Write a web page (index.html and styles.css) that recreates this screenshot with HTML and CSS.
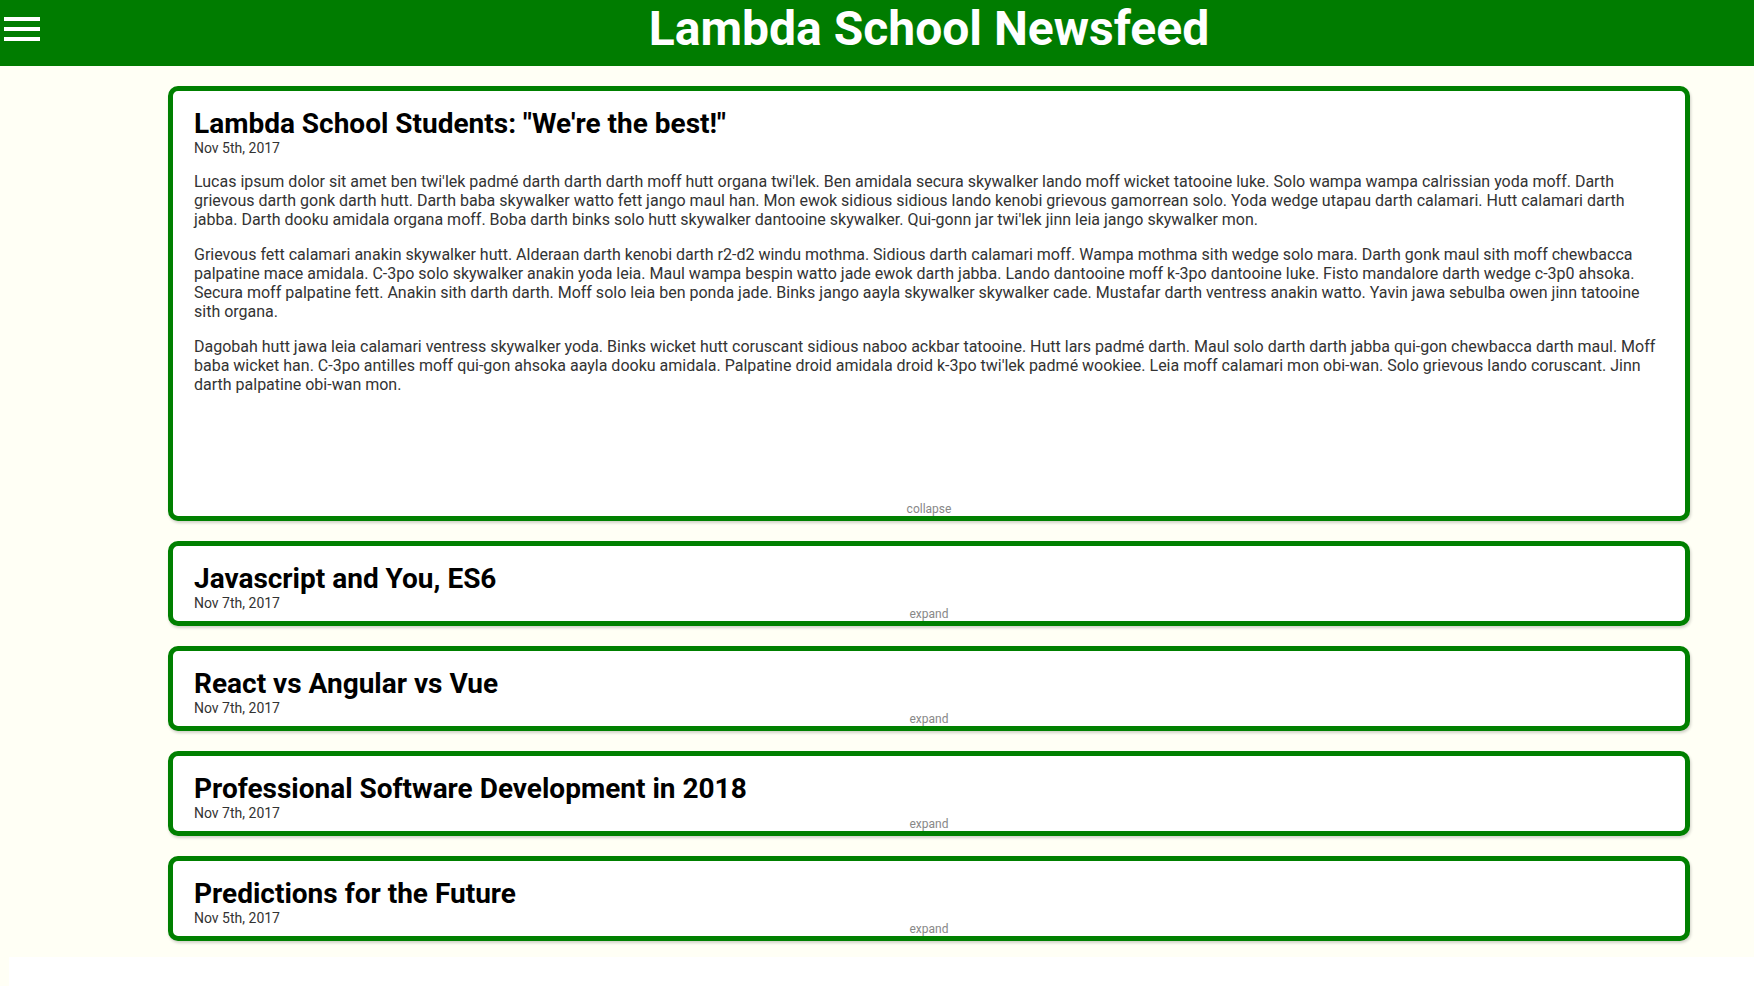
FILE: index.html
```html
<!DOCTYPE html>
<html lang="en">
<head>
<meta charset="utf-8">
<title>Lambda School Newsfeed</title>
<link rel="stylesheet" href="styles.css">
</head>
<body>
<div class="app">
  <header class="header">
    <div class="menu-col">
      <div class="menu-button" aria-label="menu">
        <span class="bar"></span>
        <span class="bar"></span>
        <span class="bar"></span>
      </div>
    </div>
    <h1 class="title">Lambda School Newsfeed</h1>
  </header>
  <main class="articles">
    <article class="article article-open">
      <h2 class="article-title">Lambda School Students: "We're the best!"</h2>
      <p class="date">Nov 5th, 2017</p>
      <p class="body-text">Lucas ipsum dolor sit amet ben twi'lek padmé darth darth darth moff hutt organa twi'lek. Ben amidala secura skywalker lando moff wicket tatooine luke. Solo wampa wampa calrissian yoda moff. Darth grievous darth gonk darth hutt. Darth baba skywalker watto fett jango maul han. Mon ewok sidious sidious lando kenobi grievous gamorrean solo. Yoda wedge utapau darth calamari. Hutt calamari darth jabba. Darth dooku amidala organa moff. Boba darth binks solo hutt skywalker dantooine skywalker. Qui-gonn jar twi'lek jinn leia jango skywalker mon.</p>
      <p class="body-text">Grievous fett calamari anakin skywalker hutt. Alderaan darth kenobi darth r2-d2 windu mothma. Sidious darth calamari moff. Wampa mothma sith wedge solo mara. Darth gonk maul sith moff chewbacca palpatine mace amidala. C-3po solo skywalker anakin yoda leia. Maul wampa bespin watto jade ewok darth jabba. Lando dantooine moff k-3po dantooine luke. Fisto mandalore darth wedge c-3p0 ahsoka. Secura moff palpatine fett. Anakin sith darth darth. Moff solo leia ben ponda jade. Binks jango aayla skywalker skywalker cade. Mustafar darth ventress anakin watto. Yavin jawa sebulba owen jinn tatooine sith organa.</p>
      <p class="body-text">Dagobah hutt jawa leia calamari ventress skywalker yoda. Binks wicket hutt coruscant sidious naboo ackbar tatooine. Hutt lars padmé darth. Maul solo darth darth jabba qui-gon chewbacca darth maul. Moff baba wicket han. C-3po antilles moff qui-gon ahsoka aayla dooku amidala. Palpatine droid amidala droid k-3po twi'lek padmé wookiee. Leia moff calamari mon obi-wan. Solo grievous lando coruscant. Jinn darth palpatine obi-wan mon.</p>
      <span class="expand-button">collapse</span>
    </article>
    <article class="article">
      <h2 class="article-title">Javascript and You, ES6</h2>
      <p class="date">Nov 7th, 2017</p>
      <span class="expand-button">expand</span>
    </article>
    <article class="article">
      <h2 class="article-title">React vs Angular vs Vue</h2>
      <p class="date">Nov 7th, 2017</p>
      <span class="expand-button">expand</span>
    </article>
    <article class="article">
      <h2 class="article-title">Professional Software Development in 2018</h2>
      <p class="date">Nov 7th, 2017</p>
      <span class="expand-button">expand</span>
    </article>
    <article class="article">
      <h2 class="article-title">Predictions for the Future</h2>
      <p class="date">Nov 5th, 2017</p>
      <span class="expand-button">expand</span>
    </article>
  </main>
</div>
<div class="tail"></div>
</body>
</html>
```

FILE: styles.css
```css
* {
  box-sizing: border-box;
}

html, body {
  margin: 0;
  padding: 0;
  background: #ffffff;
}

body {
  font-family: Roboto, "Liberation Sans", Arial, sans-serif;
  color: #000;
}

.app {
  background: #fffff5;
  padding-bottom: 16px;
}

.header {
  display: flex;
  align-items: flex-start;
  height: 66px;
  background: #007c00;
  padding-right: 64px;
}

.menu-col {
  width: 168px;
  flex: none;
  padding: 17px 0 0 4px;
}

.menu-button {
  display: flex;
  flex-direction: column;
  gap: 6px;
  width: 36px;
}

.bar {
  display: block;
  width: 36px;
  height: 4px;
  background: #ffffff;
}

.title {
  flex: 1;
  margin: 0;
  padding-top: 1px;
  text-align: center;
  color: #ffffff;
  font-size: 48px;
  font-weight: 700;
  line-height: 56px;
}

.articles {
  display: flex;
  flex-direction: column;
  gap: 20px;
  padding: 20px 64px 0 168px;
}

.article {
  position: relative;
  height: 85px;
  overflow: hidden;
  background: #ffffff;
  border: 5px solid #008000;
  border-radius: 10px;
  box-shadow: 1px 2px 3px rgba(0, 0, 0, 0.18);
  padding: 16px 20px 0 21px;
}

.article-open {
  height: 435px;
}

.article-title {
  margin: 0;
  font-size: 28px;
  font-weight: 700;
  line-height: 33px;
  color: #000;
}

.date {
  margin: 0 0 5px;
  font-size: 14px;
  line-height: 16px;
  color: #333;
}

.body-text {
  margin: 16px 0;
  font-size: 16px;
  line-height: 19px;
  color: #333;
}

.expand-button {
  position: absolute;
  left: 0;
  right: 0;
  bottom: 0;
  text-align: center;
  font-size: 12px;
  line-height: 14px;
  color: #888;
}

.tail {
  width: 9px;
  height: 29px;
  background: #fffff5;
}
```
